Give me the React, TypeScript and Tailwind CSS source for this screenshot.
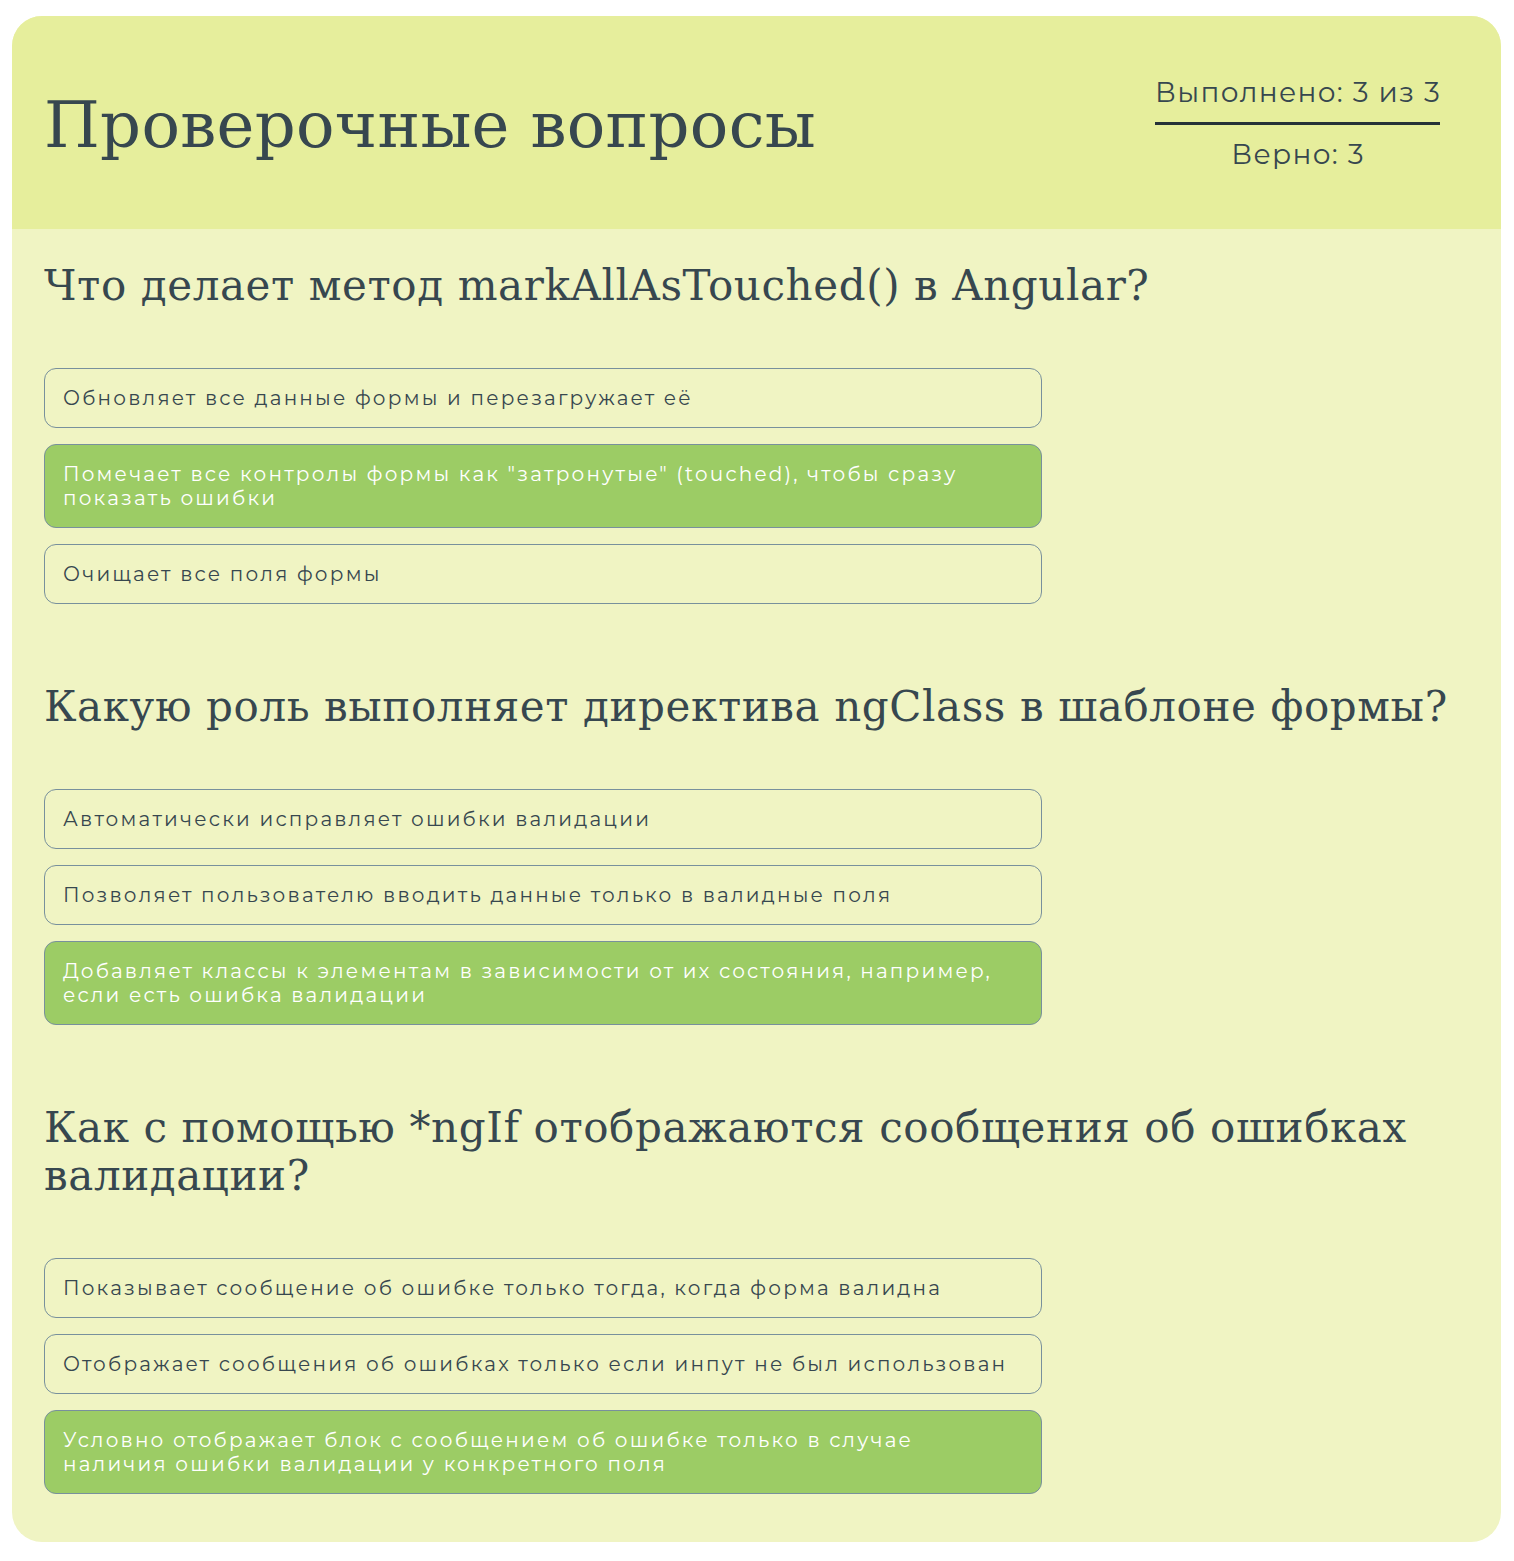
import React from "react";

type Option = { text: string; correct?: boolean };
type Question = { title: string; options: Option[] };

const questions: Question[] = [
  {
    title: "Что делает метод markAllAsTouched() в Angular?",
    options: [
      { text: "Обновляет все данные формы и перезагружает её" },
      {
        text: 'Помечает все контролы формы как "затронутые" (touched), чтобы сразу показать ошибки',
        correct: true,
      },
      { text: "Очищает все поля формы" },
    ],
  },
  {
    title: "Какую роль выполняет директива ngClass в шаблоне формы?",
    options: [
      { text: "Автоматически исправляет ошибки валидации" },
      { text: "Позволяет пользователю вводить данные только в валидные поля" },
      {
        text: "Добавляет классы к элементам в зависимости от их состояния, например, если есть ошибка валидации",
        correct: true,
      },
    ],
  },
  {
    title: "Как с помощью *ngIf отображаются сообщения об ошибках валидации?",
    options: [
      { text: "Показывает сообщение об ошибке только тогда, когда форма валидна" },
      { text: "Отображает сообщения об ошибках только если инпут не был использован" },
      {
        text: "Условно отображает блок с сообщением об ошибке только в случае наличия ошибки валидации у конкретного поля",
        correct: true,
      },
    ],
  },
];

const slab = "font-['Roboto_Slab','DejaVu_Serif',serif]";
const sans = "font-['Montserrat','Open_Sans',sans-serif]";

export default function App() {
  return (
    <div className="bg-white min-h-[1561px] pt-4 pb-5 pl-3 pr-[13px]">
      <div className="rounded-[30px] overflow-hidden bg-[#f0f4c3] text-[#37474f]">
        <header className="h-[213px] bg-[#e6ee9c] flex items-center justify-between pl-8 pr-[60px]">
          <h1 className={`${slab} text-[64px] tracking-[0.3px] leading-none mt-1`}>
            Проверочные вопросы
          </h1>
          <div className={`${sans} flex flex-col items-center text-[28px] tracking-[1.3px] mt-[1px]`}>
            <span className="leading-[34px]">Выполнено: 3 из 3</span>
            <span className="w-[285px] h-[3px] bg-[#263238] mt-[13px] mb-[12px]"></span>
            <span className="leading-[34px]">Верно: 3</span>
          </div>
        </header>

        <main className="px-8 pt-[33px] pb-12 flex flex-col gap-[79px]">
          {questions.map((q) => (
            <section key={q.title}>
              <h2 className={`${slab} text-[42px] leading-[48px] tracking-[0.6px] mb-[58px]`}>
                {q.title}
              </h2>
              <div className="flex flex-col gap-4 w-[998px]">
                {q.options.map((o) => (
                  <div
                    key={o.text}
                    className={`${sans} border border-[#78909c] rounded-xl px-[18px] py-[17px] text-[20px] leading-[24px] tracking-[2.2px] ${
                      o.correct ? "bg-[#9ccc65] text-white" : "text-[#37474f]"
                    }`}
                  >
                    {o.text}
                  </div>
                ))}
              </div>
            </section>
          ))}
        </main>
      </div>
    </div>
  );
}
